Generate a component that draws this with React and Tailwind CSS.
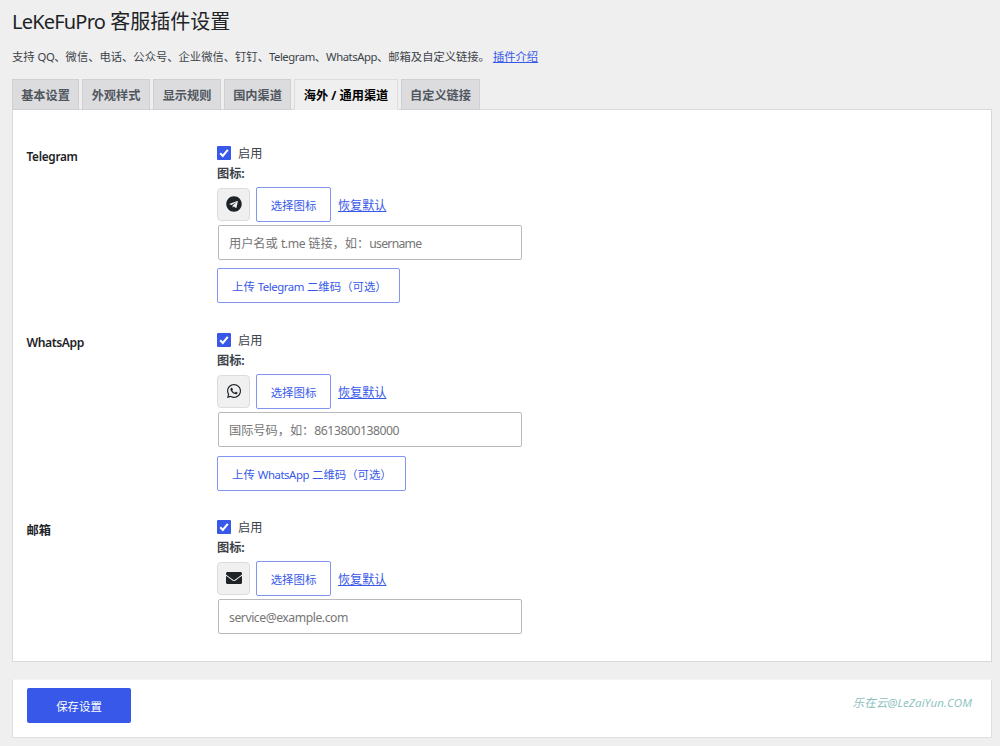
import React from 'react';
import { FaTelegram, FaWhatsapp, FaEnvelope } from 'react-icons/fa';

const tabs = [
  { label: '基本设置', width: 'w-[67px]' },
  { label: '外观样式', width: 'w-[68px]' },
  { label: '显示规则', width: 'w-[68px]' },
  { label: '国内渠道', width: 'w-[67px]' },
  { label: '海外 / 通用渠道', width: 'w-[104px]', active: true },
  { label: '自定义链接', width: 'w-[79px]' },
];

const channels = [
  {
    name: 'Telegram',
    height: 'h-[187px]',
    nameClass: 'text-[11.8px] tracking-[-0.3px]',
    Icon: FaTelegram,
    before: '用户名或 ',
    latin: 't.me',
    after: ' 链接，如：',
    tail: 'username',
    tailClass: 'tracking-[-0.7px]',
    upload: 'Telegram',
    uploadWidth: 'w-[183px]',
    uploadGap: 'mt-[8px]',
  },
  {
    name: 'WhatsApp',
    height: 'h-[187px]',
    nameClass: 'text-[12.2px] tracking-[-0.45px]',
    Icon: FaWhatsapp,
    before: '国际号码，如：',
    tail: '8613800138000',
    tailClass: 'tracking-[-0.45px]',
    upload: 'WhatsApp',
    uploadWidth: 'w-[189px]',
    uploadGap: 'mt-[9px]',
  },
  {
    name: '邮箱',
    height: 'h-[150px]',
    nameClass: 'pt-px text-[12.2px]',
    Icon: FaEnvelope,
    tail: 'service@example.com',
    tailClass: 'tracking-[-0.45px]',
  },
];

function Latin({ children }) {
  return <span className="tracking-[-0.45px]">{children}</span>;
}

function Channel({ channel }) {
  const { Icon } = channel;
  return (
    <section className={`flex pl-[13.5px] ${channel.height}`}>
      <h2 className="w-[190.5px] shrink-0 pt-[3px] text-[12.2px] font-semibold leading-[20px] text-[#1d2327]">
        <span className={`inline-block ${channel.nameClass}`}>{channel.name}</span>
      </h2>
      <div className="text-[12.2px] text-[#3c434a]">
        <div className="flex h-[20px] items-center">
          <span className="flex size-[14px] items-center justify-center rounded-[1px] bg-[#3858e9]">
            <svg viewBox="0 0 14 14" className="size-[14px]" fill="none" stroke="white" strokeWidth="2.1">
              <path d="M3.2 7.3 5.8 10 10.8 3.9" />
            </svg>
          </span>
          <span className="ml-[7px] pt-[2px] leading-[20px]">启用</span>
        </div>
        <div className="h-[24px] font-bold leading-[21px]">图标:</div>
        <div className="flex h-[35px] items-center">
          <span className="flex size-[33px] items-center justify-center rounded-[4px] border border-[#dcdcde] bg-[#f0f0f1] pb-[2px] text-[#1d2327]">
            <Icon size={16} />
          </span>
          <button className="ml-[6px] h-[35px] w-[75px] rounded-[2px] border border-[#8295f1] pt-[2px] text-[11.4px] text-[#3858e9]">
            选择图标
          </button>
          <a className="ml-[7px] pt-[3px] text-[12.1px] text-[#3858e9] underline underline-offset-[1px]">恢复默认</a>
        </div>
        <div className="ml-[1px] mt-[3px] flex h-[35px] w-[304px] items-center whitespace-pre rounded-[2px] border border-[#b9babd] pl-[10px] pt-[4px] text-[12.2px] text-[#757575]">
          {channel.before}
          {channel.latin && <Latin>{channel.latin}</Latin>}
          {channel.after}
          <span className={channel.tailClass}>{channel.tail}</span>
        </div>
        {channel.upload && (
          <button className={`flex h-[35px] items-center whitespace-pre rounded-[2px] border border-[#8295f1] pl-[14px] pt-[2px] text-[11.4px] text-[#3858e9] ${channel.uploadGap} ${channel.uploadWidth}`}>
            上传 <Latin>{channel.upload}</Latin> 二维码（可选）
          </button>
        )}
      </div>
    </section>
  );
}

export default function App() {
  return (
    <main className="h-[746px] w-[1000px] overflow-hidden bg-[#efefef] pl-[12px] pr-[8px] font-['Noto_Sans','Noto_Sans_CJK_SC',sans-serif]">
      <h1 className="h-[46px] pt-[8px] text-[20px] leading-[28px] text-[#1d2327]">
        <span className="tracking-[-0.8px]">LeKeFuPro</span> 客服插件设置
      </h1>
      <p className="flex h-[33px] whitespace-pre text-[11.3px] leading-[22px] text-[#3c434a]">
        支持 <Latin>QQ</Latin>、微信、电话、公众号、企业微信、钉钉、<Latin>Telegram</Latin>、<Latin>WhatsApp</Latin>、邮箱及自定义链接。
        <a className="ml-[3px] text-[#3858e9] underline underline-offset-[1px]">插件介绍</a>
      </p>
      <nav className="relative z-10 -mb-px flex h-[31px] gap-[3px]">
        {tabs.map((tab) => (
          <a
            key={tab.label}
            className={`flex items-center justify-center whitespace-nowrap border pt-[4px] text-[12.2px] font-bold ${tab.width} ${
              tab.active
                ? 'border-[#dcdcde] border-b-[#efefef] bg-[#efefef] text-black'
                : 'border-[#cfd0d3] bg-[#dcdcde] text-[#50575e]'
            }`}
          >
            {tab.label}
          </a>
        ))}
      </nav>
      <div className="h-[553px] border border-[#d8d9dc] bg-white pt-[33px]">
        {channels.map((channel) => (
          <Channel key={channel.name} channel={channel} />
        ))}
      </div>
      <footer className="mt-[17px] flex h-[59px] justify-between border border-[#dedfe1] border-t-[#f5f5f5] bg-white pl-[14px] pr-[19px] pt-[8px]">
        <button className="h-[35px] w-[104px] rounded-[2px] bg-[#3858e9] pt-[2px] text-[11.4px] text-white">保存设置</button>
        <span className="pt-[5px] font-['Open_Sans','Noto_Sans_CJK_SC',sans-serif] text-[11.6px] italic leading-[20px] tracking-[0.05px] text-[#8bbfbd]">
          乐在云@LeZaiYun.COM
        </span>
      </footer>
    </main>
  );
}
